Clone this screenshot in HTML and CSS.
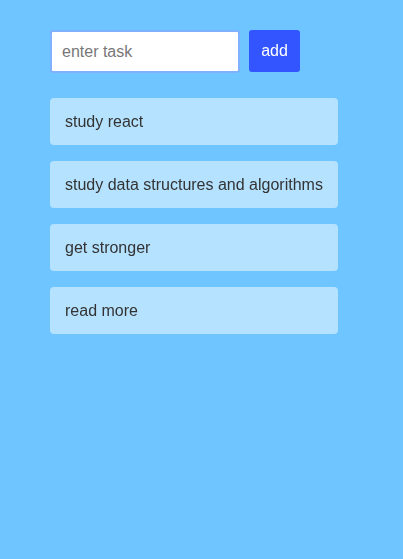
FILE: index.html
```html
<!DOCTYPE html>
<html>
<head>
<meta charset="utf-8">
<link rel="stylesheet" href="styles.css">
</head>
<body>
<div class="app">
  <form class="entry">
    <input class="task-input" type="text" placeholder="enter task" autofocus>
    <button class="add-btn" type="button">add</button>
  </form>
  <ul class="tasks">
    <li class="task">study react</li>
    <li class="task">study data structures and algorithms</li>
    <li class="task">get stronger</li>
    <li class="task">read more</li>
  </ul>
</div>
</body>
</html>
```
FILE: styles.css
```css
html, body {
  margin: 0;
  padding: 0;
  height: 100%;
  background: #6ec5ff;
  font-family: "Liberation Sans", Arial, sans-serif;
}
.app {
  padding: 30px 50px;
}
.entry {
  display: flex;
  gap: 9px;
  margin: 0;
}
.task-input {
  box-sizing: border-box;
  width: 190px;
  height: 43px;
  border: 2px solid #7fb1ff;
  border-radius: 3px;
  padding: 0 10px;
  font-family: inherit;
  font-size: 16px;
  color: #333;
  background: #fff;
  outline: none;
}
.task-input::placeholder {
  color: #777;
}
.add-btn {
  box-sizing: border-box;
  width: 51px;
  height: 42px;
  border: none;
  border-radius: 3px;
  background: #3355ff;
  color: #fff;
  font-family: inherit;
  font-size: 16px;
  padding: 0;
}
.tasks {
  list-style: none;
  margin: 25px 0 0;
  padding: 0;
  width: 288px;
  display: flex;
  flex-direction: column;
  gap: 16px;
}
.task {
  box-sizing: border-box;
  height: 47px;
  display: flex;
  align-items: center;
  padding: 0 15px;
  background: #b5e2ff;
  border-radius: 4px;
  color: #333;
  font-size: 16px;
  white-space: nowrap;
}
```
